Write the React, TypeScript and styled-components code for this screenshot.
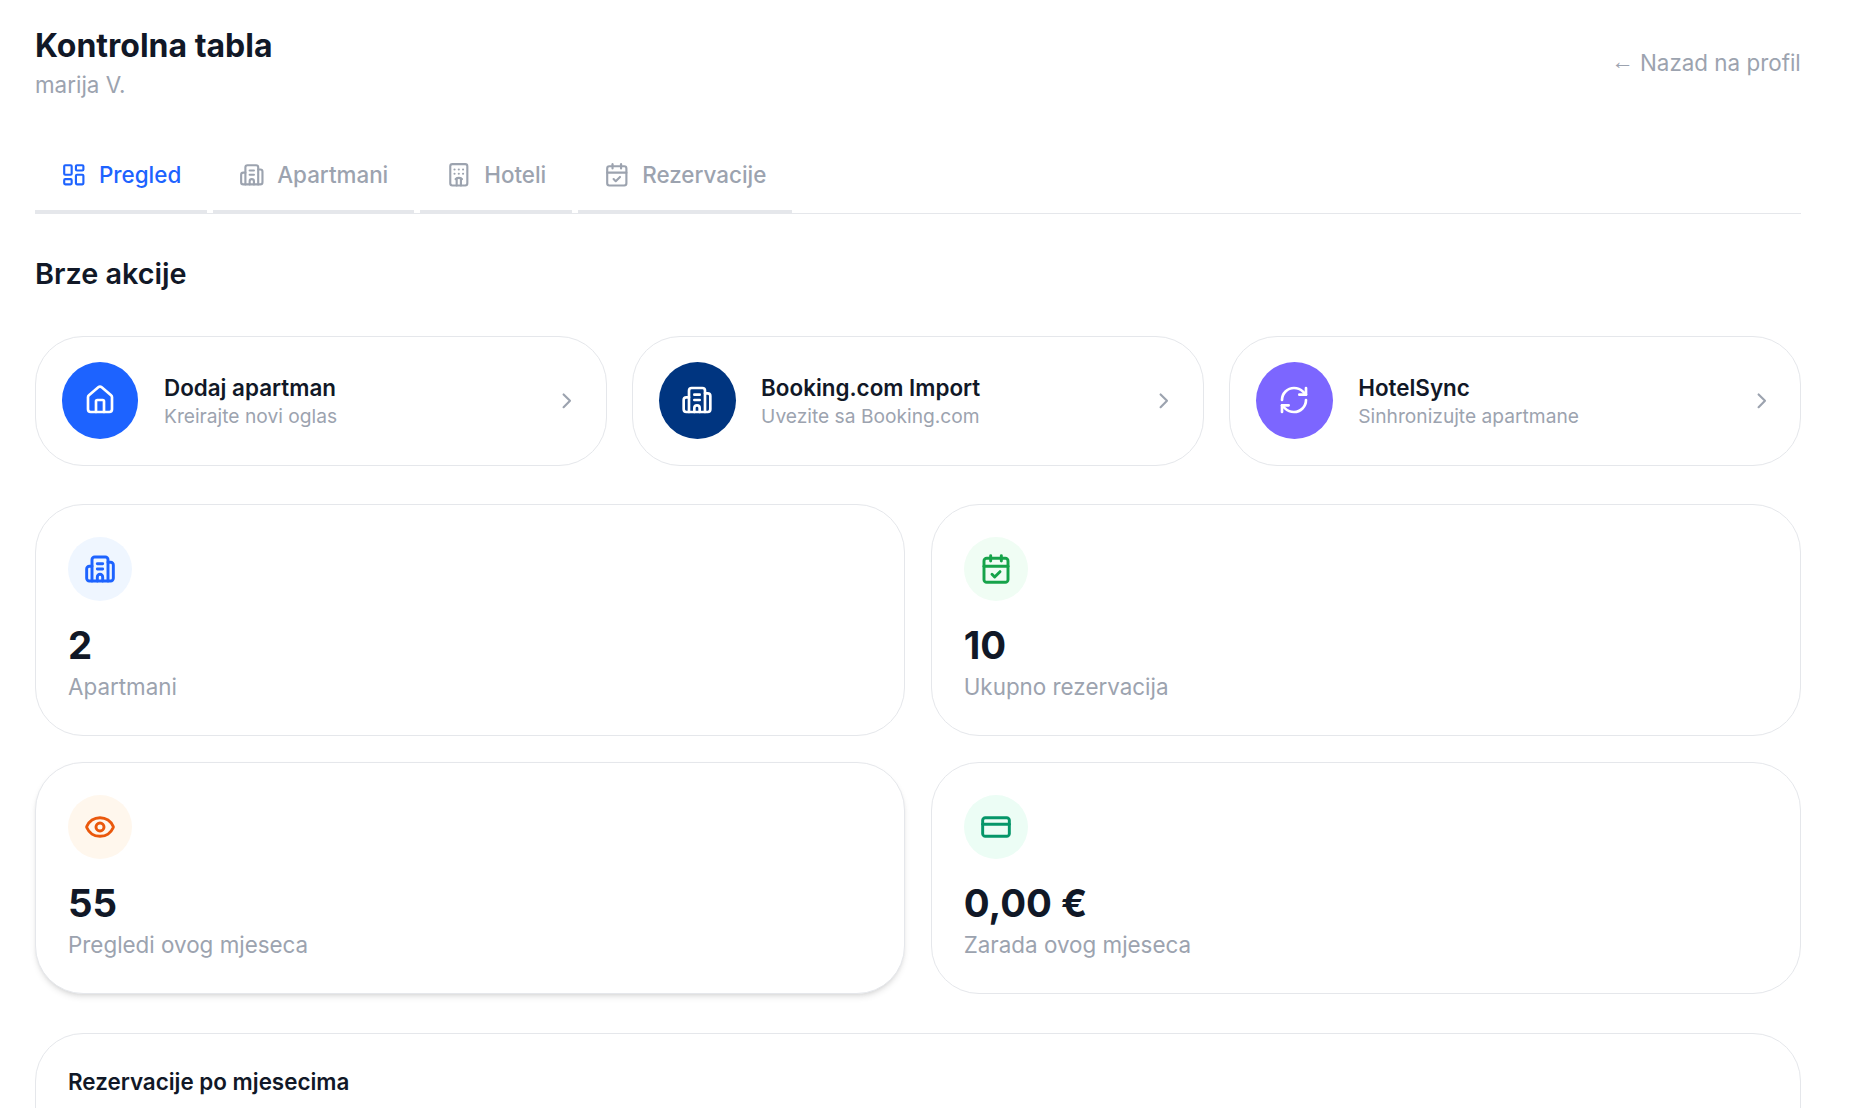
import React from "react";
import styled, { createGlobalStyle } from "styled-components";
import {
  LayoutDashboard,
  Building2,
  Hotel,
  CalendarCheck,
  House,
  RefreshCw,
  ChevronRight,
  Eye,
  CreditCard,
} from "lucide-react";

const Global = createGlobalStyle`
  html, body { margin: 0; padding: 0; background: #ffffff; height: 1108px; overflow: hidden; }
  body { font-family: Inter, "Noto Sans", sans-serif; color: #111827; }
  * { box-sizing: border-box; }
`;

const Page = styled.div`
  padding: 24px 71.2px 0 35px;
  height: 1108px;
  overflow: hidden;
`;

const Header = styled.header`
  display: flex;
  justify-content: space-between;
  align-items: center;
  height: 78px;
`;

const TitleBlock = styled.div`
  display: flex;
  flex-direction: column;
  padding-top: 1px;
`;

const PageTitle = styled.h1`
  margin: 0;
  font-size: 32px;
  line-height: 42px;
  font-weight: 700;
  color: #111827;
`;

const Subtitle = styled.p`
  margin: 0;
  font-size: 22.4px;
  line-height: 36px;
  color: #9ca3af;
`;

const BackLink = styled.a`
  font-size: 22.4px;
  line-height: 32px;
  color: #9ca3af;
  text-decoration: none;
`;

const BackArrow = styled.span`
  font-family: "Liberation Sans", sans-serif;
  vertical-align: 2px;
  line-height: 1;
`;

const Tabs = styled.nav`
  display: flex;
  gap: 6.4px;
  margin-top: 34px;
  border-bottom: 1px solid #e5e7eb;
  height: 78px;
`;

const Tab = styled.div<{ $active?: boolean }>`
  display: flex;
  align-items: center;
  gap: 12.8px;
  padding: 3px 25.6px 0;
  height: 78px;
  border-bottom: 4px solid #e5e7eb;
  font-size: 22.4px;
  font-weight: 500;
  color: ${(p) => (p.$active ? "#1d63ff" : "#9ca3af")};
`;

const SectionTitle = styled.h2`
  margin: 42px 0 0;
  font-size: 28.8px;
  line-height: 36px;
  font-weight: 600;
  color: #111827;
`;

const QuickGrid = styled.div`
  display: grid;
  grid-template-columns: repeat(3, 1fr);
  gap: 25.6px;
  margin-top: 44px;
`;

const QuickCard = styled.div`
  display: flex;
  align-items: center;
  gap: 25.6px;
  height: 130px;
  padding: 0 25.6px;
  border: 1px solid #e5e7eb;
  border-radius: 48px;
  background: #ffffff;
`;

const QuickIcon = styled.div<{ $bg: string }>`
  display: flex;
  align-items: center;
  justify-content: center;
  flex: none;
  width: 76.8px;
  height: 76.8px;
  margin-top: -1px;
  border-radius: 50%;
  background: ${(p) => p.$bg};
  color: #ffffff;
`;

const QuickText = styled.div`
  flex: 1;
  min-width: 0;
  padding-top: 2px;
`;

const QuickTitle = styled.div`
  font-size: 22.4px;
  line-height: 28px;
  font-weight: 600;
  color: #111827;
`;

const QuickSub = styled.div`
  font-size: 19.2px;
  line-height: 28px;
  color: #9ca3af;
`;

const Chevron = styled(ChevronRight)`
  flex: none;
  color: #9ca3af;
`;

const StatGrid = styled.div`
  display: grid;
  grid-template-columns: repeat(2, 1fr);
  gap: 26.4px 25.6px;
  margin-top: 38px;
`;

const StatCard = styled.div<{ $raised?: boolean }>`
  height: 231.6px;
  padding: 32px;
  border: 1px solid #e5e7eb;
  border-radius: 48px;
  background: #ffffff;
  box-shadow: ${(p) =>
    p.$raised ? "0 4px 6px -1px rgba(0,0,0,.1), 0 2px 4px -2px rgba(0,0,0,.1)" : "none"};
`;

const StatIcon = styled.div<{ $bg: string; $fg: string }>`
  display: flex;
  align-items: center;
  justify-content: center;
  width: 64px;
  height: 64px;
  border-radius: 50%;
  background: ${(p) => p.$bg};
  color: ${(p) => p.$fg};
`;

const StatValue = styled.div`
  margin-top: 20px;
  font-size: 38.4px;
  line-height: 48px;
  font-weight: 700;
  color: #111827;
`;

const StatLabel = styled.div`
  margin-top: 2px;
  font-size: 22.4px;
  line-height: 32px;
  color: #9ca3af;
`;

const ChartCard = styled.section`
  margin-top: 39.4px;
  height: 400px;
  padding: 32px;
  border: 1px solid #e5e7eb;
  border-radius: 48px;
  background: #ffffff;
`;

const ChartTitle = styled.h3`
  margin: 0;
  font-size: 22.4px;
  line-height: 32px;
  font-weight: 600;
  color: #111827;
`;

const tabs = [
  { label: "Pregled", Icon: LayoutDashboard, active: true },
  { label: "Apartmani", Icon: Building2 },
  { label: "Hoteli", Icon: Hotel },
  { label: "Rezervacije", Icon: CalendarCheck },
];

const quick = [
  { title: "Dodaj apartman", sub: "Kreirajte novi oglas", bg: "#1d63ff", Icon: House },
  { title: "Booking.com Import", sub: "Uvezite sa Booking.com", bg: "#003580", Icon: Building2 },
  { title: "HotelSync", sub: "Sinhronizujte apartmane", bg: "#7c66ff", Icon: RefreshCw },
];

const stats = [
  { value: "2", label: "Apartmani", bg: "#eff6ff", fg: "#1d63ff", Icon: Building2 },
  { value: "10", label: "Ukupno rezervacija", bg: "#f0fdf4", fg: "#16a34a", Icon: CalendarCheck },
  { value: "55", label: "Pregledi ovog mjeseca", bg: "#fff7ed", fg: "#ea580c", Icon: Eye, raised: true },
  { value: "0,00 €", label: "Zarada ovog mjeseca", bg: "#ecfdf5", fg: "#059669", Icon: CreditCard },
];

export default function App() {
  return (
    <Page>
      <Global />
      <Header>
        <TitleBlock>
          <PageTitle>Kontrolna tabla</PageTitle>
          <Subtitle>marija V.</Subtitle>
        </TitleBlock>
        <BackLink href="#">
          <BackArrow>←</BackArrow> Nazad na profil
        </BackLink>
      </Header>
      <Tabs>
        {tabs.map(({ label, Icon, active }) => (
          <Tab key={label} $active={active}>
            <Icon size={25.6} />
            {label}
          </Tab>
        ))}
      </Tabs>
      <SectionTitle>Brze akcije</SectionTitle>
      <QuickGrid>
        {quick.map(({ title, sub, bg, Icon }) => (
          <QuickCard key={title}>
            <QuickIcon $bg={bg}>
              <Icon size={32} />
            </QuickIcon>
            <QuickText>
              <QuickTitle>{title}</QuickTitle>
              <QuickSub>{sub}</QuickSub>
            </QuickText>
            <Chevron size={25.6} />
          </QuickCard>
        ))}
      </QuickGrid>
      <StatGrid>
        {stats.map(({ value, label, bg, fg, Icon, raised }) => (
          <StatCard key={label} $raised={raised}>
            <StatIcon $bg={bg} $fg={fg}>
              <Icon size={32} strokeWidth={2.2} />
            </StatIcon>
            <StatValue>{value}</StatValue>
            <StatLabel>{label}</StatLabel>
          </StatCard>
        ))}
      </StatGrid>
      <ChartCard>
        <ChartTitle>Rezervacije po mjesecima</ChartTitle>
      </ChartCard>
    </Page>
  );
}
